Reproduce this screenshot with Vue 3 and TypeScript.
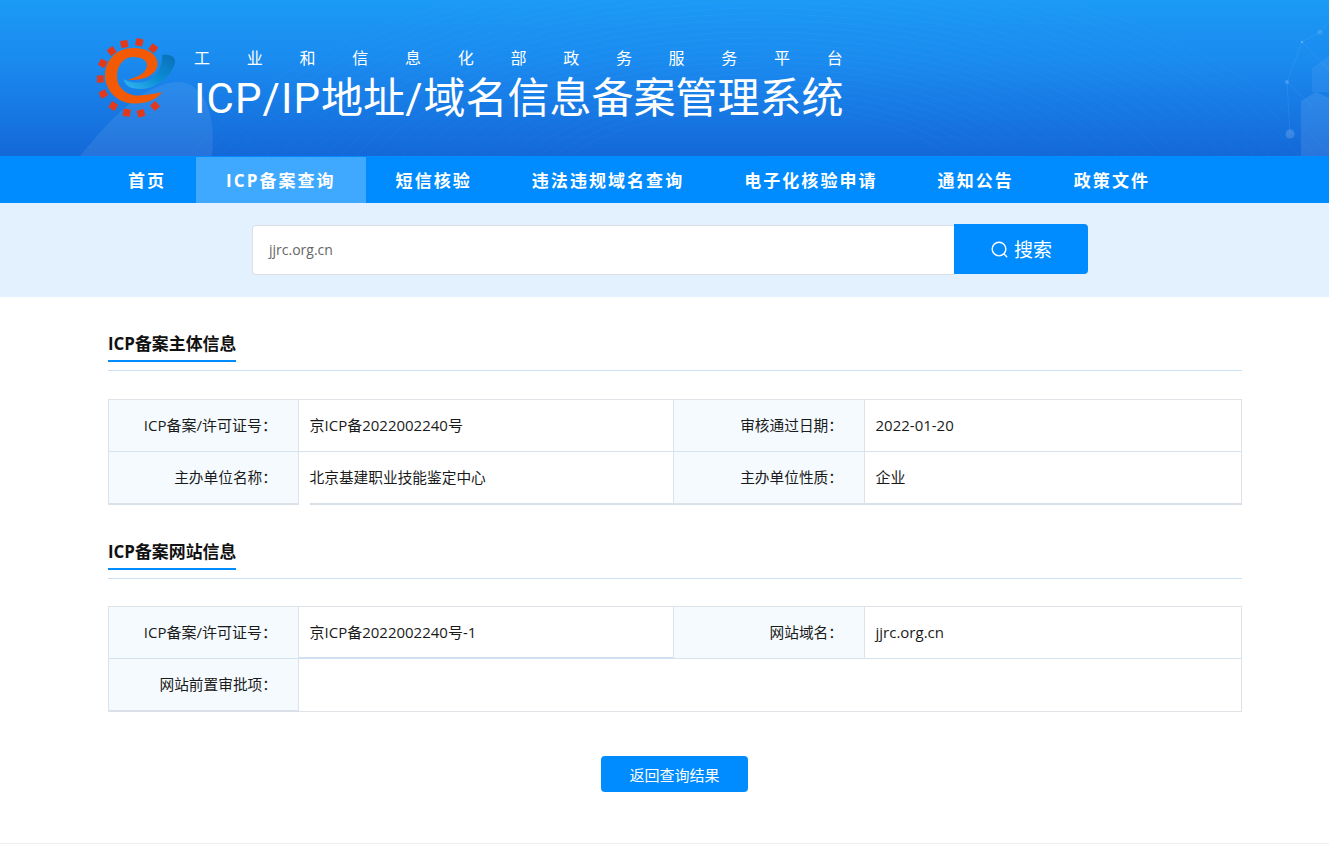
<script setup lang="ts">
const navItems = ['首页', 'ICP备案查询', '短信核验', '违法违规域名查询', '电子化核验申请', '通知公告', '政策文件']
const subtitle = '工业和信息化部政务服务平台'.split('')
const toothCentres: [number, number][] = [
  [27.3, 6], [42.3, 4.3], [56.3, 10.3], [14.7, 13], [5.7, 25.3], [3, 41],
  [6.3, 56], [16.3, 68], [29.7, 74.7], [44, 75.3], [58, 68],
]
const teeth = toothCentres.map(([x, y]) => ({
  x,
  y,
  angle: (Math.atan2(y - 40, x - 34) * 180) / Math.PI,
}))
const waves = Array.from({ length: 26 }, (_, i) => i)
</script>

<template>
  <div class="page">
    <header class="hero">
      <svg class="hero-art" viewBox="0 0 1329 156" preserveAspectRatio="none" aria-hidden="true">
        <path d="M80 156 C105 125 145 80 180 82 C205 84 216 115 212 156 Z" fill="#fff" opacity="0.08" />
        <g fill="none" stroke="#bfe3ff" stroke-width="1">
          <ellipse v-for="w in waves" :key="w" :cx="760" :cy="190 + w * 3" :rx="210 + w * 16" :ry="80 + w * 9" opacity="0.035" />
        </g>
        <g fill="#cfe8ff">
          <path d="M1301 156 V101 L1316 92 L1329 98 V156Z" opacity="0.11" />
          <path d="M1312 92 V68 L1329 56 V92Z" opacity="0.07" />
          <circle cx="1290" cy="134" r="4.5" opacity="0.2" />
          <circle cx="1287" cy="82" r="2" opacity="0.22" />
          <circle cx="1302" cy="42" r="1.2" opacity="0.3" />
          <circle cx="1320" cy="32" r="2.6" opacity="0.14" />
        </g>
        <g stroke="#cfe8ff" fill="none" opacity="0.08">
          <path d="M1290 134 L1287 82 L1302 42 L1320 32 L1329 22" />
          <path d="M1287 82 L1312 106 M1302 42 L1329 70" />
        </g>
      </svg>
      <div class="brand">
        <svg class="logo" viewBox="0 0 80 80" aria-label="logo">
          <defs>
            <linearGradient id="swoosh" x1="1" y1="0" x2="0" y2="1">
              <stop offset="0" stop-color="#0a6fb8" />
              <stop offset="0.55" stop-color="#0c8fd6" />
              <stop offset="1" stop-color="#35b6f2" />
            </linearGradient>
          </defs>
          <rect
            v-for="t in teeth"
            :key="t.x"
            :x="t.x - 3.6"
            :y="t.y - 3.6"
            width="7.2"
            height="7.2"
            rx="0.6"
            fill="#e2391c"
            :transform="`rotate(${t.angle} ${t.x} ${t.y})`"
          />
          <path d="M65 17 C72 16 78 18 78 23 C78 33 62 51 44 51 C33 51 27 47 27 41 C31 44 38 45 46 44 C58 42 66 30 65 17Z" fill="url(#swoosh)" />
          <path d="M65 54 C60 62 48 66 36 65.5 C20 65 8 52 8 37.5 C8 22 20 10 36 10 C50 10 60 16 60.5 25 C61 35 50 43 30 42 C38 40 49 36 50 28 C50.5 22 44 19 36 19 C27 19 20 27 20 38 C20 50 30 58 42 57.5 C50 57 58 56 65 54Z" fill="#f25a05" />
        </svg>
        <div class="brand-text">
          <div class="subtitle"><span v-for="(c, i) in subtitle" :key="i">{{ c }}</span></div>
          <h1 class="title"><span class="latin">ICP/IP</span>地址<span class="latin">/</span>域名信息备案管理系统</h1>
        </div>
      </div>
    </header>

    <nav class="nav">
      <a v-for="(item, i) in navItems" :key="item" class="nav-item" :class="{ active: i === 1 }">{{ item }}</a>
    </nav>

    <section class="search-band">
      <div class="search">
        <div class="search-input">jjrc.org.cn</div>
        <button class="search-btn">
          <svg class="search-icon" viewBox="0 0 20 20" aria-hidden="true">
            <circle cx="9.5" cy="9.5" r="7.2" fill="none" stroke="#fff" stroke-width="1.5" />
            <path d="M14.8 14.8 L17.6 17.6" stroke="#fff" stroke-width="1.5" stroke-linecap="round" />
          </svg>
          <span>搜索</span>
        </button>
      </div>
    </section>

    <main class="content">
      <div class="sec-head"><h2 class="sec-title">ICP备案主体信息</h2></div>
      <div class="info-grid grid-a">
        <div class="cell label mixed">ICP备案/许可证号：</div>
        <div class="cell value">京ICP备2022002240号</div>
        <div class="cell label">审核通过日期：</div>
        <div class="cell value">2022-01-20</div>
        <div class="cell label last">主办单位名称：</div>
        <div class="cell value last inset">北京基建职业技能鉴定中心</div>
        <div class="cell label last">主办单位性质：</div>
        <div class="cell value last">企业</div>
      </div>

      <div class="sec-head"><h2 class="sec-title">ICP备案网站信息</h2></div>
      <div class="info-grid grid-b">
        <div class="cell label mixed">ICP备案/许可证号：</div>
        <div class="cell value thick">京ICP备2022002240号-1</div>
        <div class="cell label">网站域名：</div>
        <div class="cell value">jjrc.org.cn</div>
        <div class="cell label last">网站前置审批项：</div>
        <div class="cell value wide"></div>
      </div>

      <div class="actions"><button class="back-btn">返回查询结果</button></div>
    </main>
    <footer class="foot"></footer>
  </div>
</template>

<style>
html, body { margin: 0; background: #fff; }
</style>

<style scoped>
.page {
  font-family: "Open Sans", "Noto Sans CJK SC", sans-serif;
  color: #1a1a1a;
  font-size: 15px;
}
.hero {
  position: relative;
  height: 156px;
  overflow: hidden;
  background: linear-gradient(180deg, #1b9af6 0%, #1a8aef 40%, #1468d8 100%);
}
.hero-art { position: absolute; inset: 0; width: 100%; height: 100%; }
.brand {
  position: relative;
  display: flex;
  padding: 38px 0 0 97px;
}
.logo { width: 80px; height: 80px; flex: none; }
.brand-text { margin-left: 17px; width: 649px; color: #fff; }
.subtitle {
  display: flex;
  justify-content: space-between;
  font-size: 16px;
  line-height: 24px;
  margin-top: 8px;
}
.title {
  margin: 5px 0 0;
  font-family: Roboto, "Noto Sans CJK SC", sans-serif;
  font-size: 42px;
  font-weight: 400;
  line-height: 48px;
  white-space: nowrap;
}
.latin { letter-spacing: 1.1px; }
.nav {
  display: flex;
  height: 46px;
  padding: 1px 0 0 98px;
  background: #008cff;
}
.nav-item {
  display: flex;
  align-items: center;
  padding: 0 30px 2px;
  color: #fff;
  font-size: 17px;
  font-weight: 700;
  letter-spacing: 2.05px;
}
.nav-item.active { background: #3fa9ff; }
.search-band {
  display: flex;
  justify-content: center;
  height: 94px;
  padding-left: 11px;
  background: #e3f1ff;
}
.search { display: flex; margin-top: 21px; width: 836px; }
.search-input {
  flex: 1;
  box-sizing: border-box;
  height: 50px;
  margin-top: 1px;
  padding-left: 16px;
  line-height: 48px;
  font-size: 14px;
  background: #fff;
  border: 1px solid #dcdfe6;
  border-right: 0;
  border-radius: 4px 0 0 4px;
  color: #666;
}
.search-btn {
  width: 134px;
  height: 50px;
  display: flex;
  align-items: center;
  justify-content: center;
  gap: 5px;
  border: 0;
  border-radius: 0 4px 4px 0;
  background: #008cff;
  color: #fff;
  font-family: inherit;
  font-size: 19px;
  padding: 0;
}
.search-icon { width: 19px; height: 19px; }
.content { padding: 0 87px 0 108px; }
.sec-head {
  box-sizing: border-box;
  display: flex;
  align-items: flex-end;
  height: 74px;
  padding-bottom: 8px;
  border-bottom: 1px solid #c9e0f5;
}
.sec-title {
  margin: 0;
  font-size: 16.9px;
  font-weight: 700;
  line-height: 24px;
  color: #111;
  padding-bottom: 4px;
  border-bottom: 2px solid #008cff;
}
.info-grid {
  box-sizing: border-box;
  display: grid;
  grid-template-columns: 190px 375px 191px 1fr;
  border-top: 1px solid #dfe3e8;
  border-left: 1px solid #dfe3e8;
}
.grid-a { margin-top: 28px; }
.grid-b { margin-top: 27px; }
.cell {
  box-sizing: border-box;
  display: flex;
  align-items: center;
  height: 52px;
  padding-bottom: 2px;
  font-size: 15px;
  color: #1a1a1a;
  border-bottom: 1px solid #d5e3ef;
}
.label {
  justify-content: flex-end;
  padding-right: 21px;
  font-size: 14.7px;
  background: #f5faff;
  border-right: 1px solid #dfe3e8;
}
.label.mixed { font-size: 15px; }
.value {
  padding-left: 10.5px;
  border-right: 1px solid #dfe3e8;
  background: #fff;
}
.last { height: 53px; border-bottom: 2px solid #dbe1e8; }
.thick { border-bottom: 2px solid #cfe0f0; }
.wide { grid-column: span 3; height: 53px; border-bottom: 1px solid #dfe3e8; }
.inset {
  position: relative;
  padding-bottom: 4px;
  font-size: 14.7px;
  border-bottom: 0;
}
.inset::after {
  content: "";
  position: absolute;
  left: 11px;
  right: 0;
  bottom: 0;
  height: 2px;
  background: #dbe1e8;
}
.actions { display: flex; justify-content: center; margin-top: 44px; padding-right: 1px; }
.back-btn {
  width: 147px;
  height: 36px;
  padding: 0;
  border: 0;
  border-radius: 4px;
  background: #008cff;
  color: #fff;
  font-family: inherit;
  font-size: 15px;
}
.foot { height: 3px; margin-top: 51px; border-top: 1px solid #eee; }
</style>
